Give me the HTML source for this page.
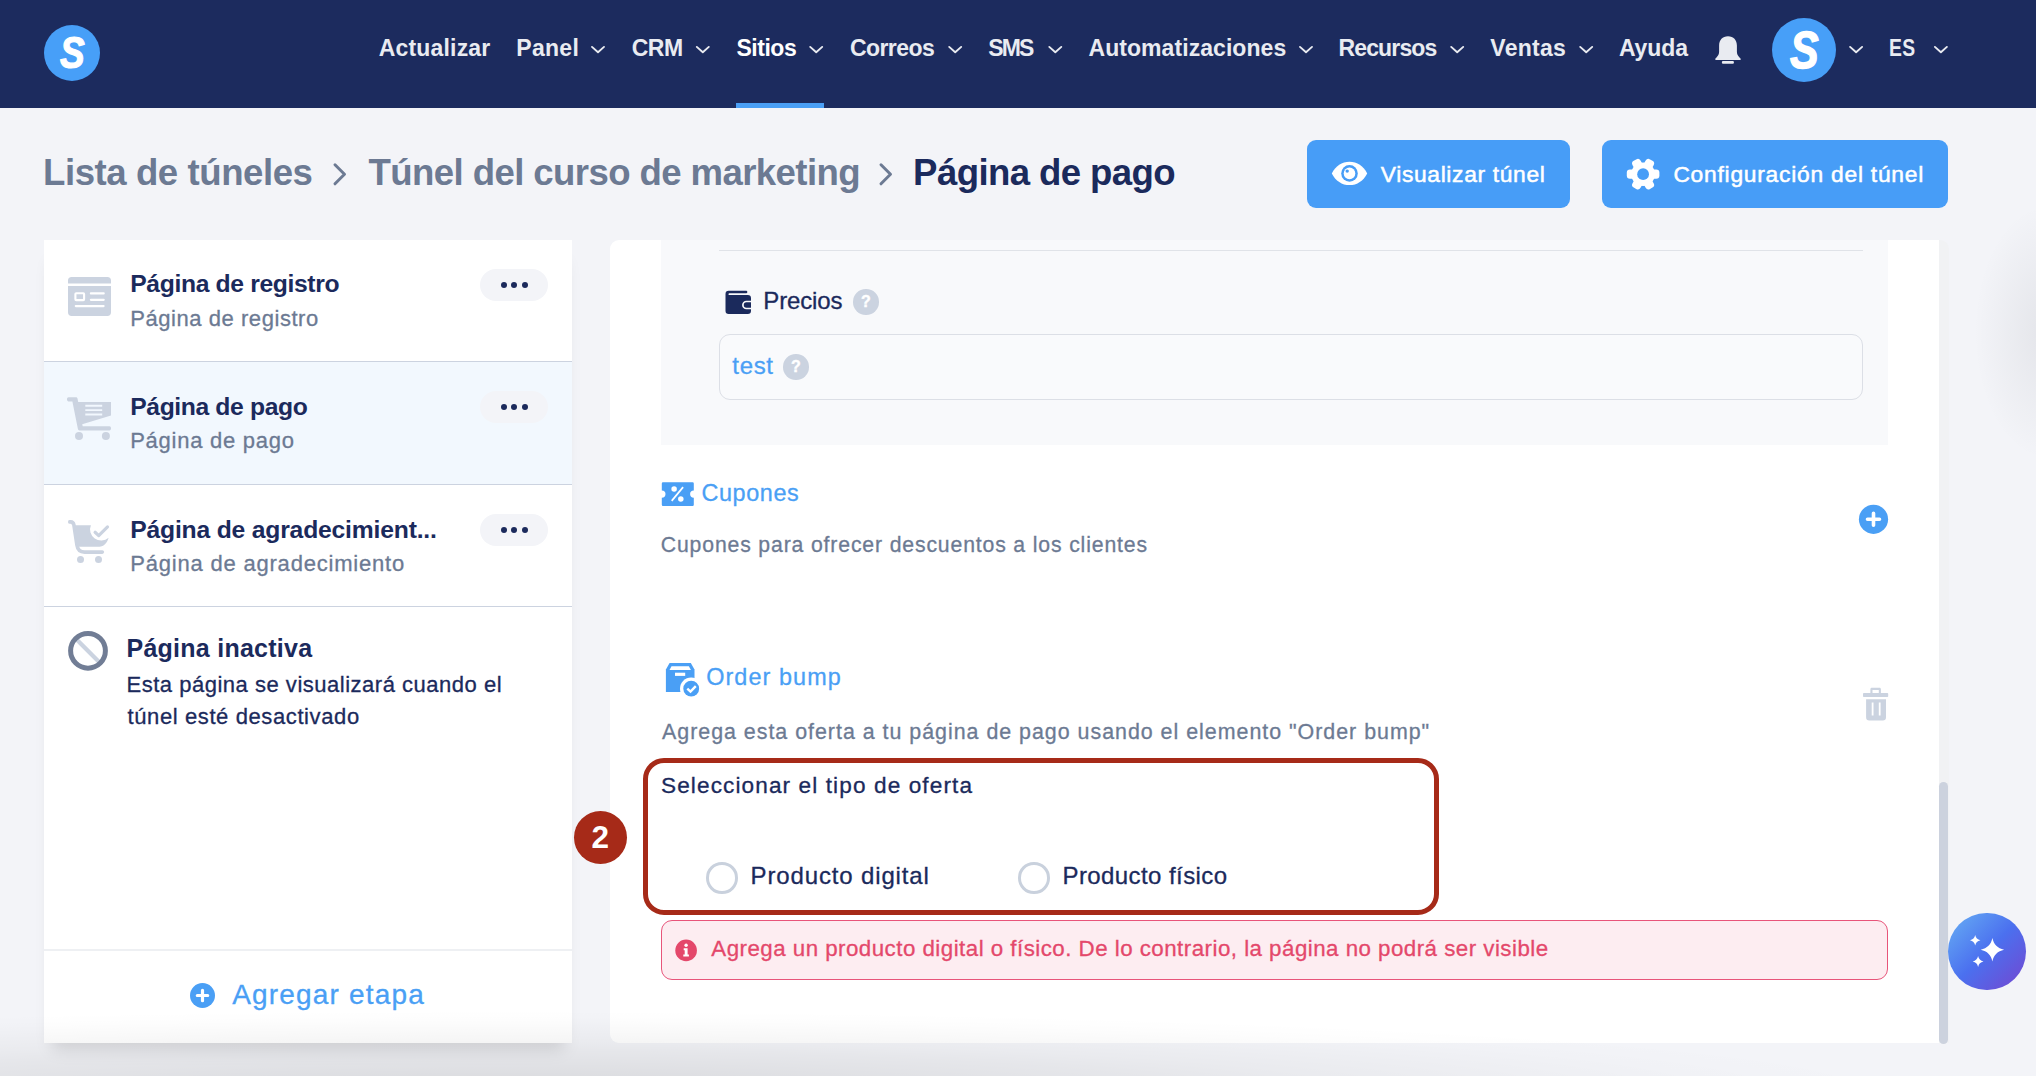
<!DOCTYPE html>
<html lang="es">
<head>
<meta charset="utf-8">
<title>Página de pago</title>
<style>
*{box-sizing:border-box;margin:0;padding:0}
html,body{width:2036px;height:1076px;overflow:hidden;background:#f3f4f8}
body{font-family:"Liberation Sans",sans-serif}
#root{position:relative;width:2036px;height:1076px;overflow:hidden;background:#f3f4f8}
#root>*{position:absolute}
#root>.grp{position:static;display:contents}
.t{position:absolute;white-space:nowrap;line-height:1;display:block}
svg{display:block;overflow:visible}

/* top nav */
#nav{left:0;top:0;width:2036px;height:107.5px;background:#1c2b5e}
#navline{left:736px;top:102.5px;width:88px;height:5px;background:#4a9ff5}
#logo{left:44px;top:25px;width:56px;height:56px;border-radius:50%;background:#479ff8}
#avatar{left:1772px;top:18px;width:64px;height:64px;border-radius:50%;background:#479ff8}
.chev{width:14px;height:8px}

/* header buttons */
.btn{background:#479df7;border-radius:9px;height:68px;top:140px}
#btn1{left:1307px;width:263px}
#btn2{left:1602px;width:346px}

/* sidebar */
#side{left:44px;top:240px;width:528px;height:802.5px;background:#fff;box-shadow:0 14px 16px -8px rgba(0,0,0,.13)}
#row2{left:44px;top:362px;width:528px;height:122px;background:#f2f8fe}
.sep{left:44px;width:528px;height:1px;background:#ccd3e0}
#sidefoot{left:44px;top:948.5px;width:528px;height:2px;background:#eef0f3}
.more{left:480px;width:68px;height:32px;border-radius:16px;background:#f3f4f8}
.more i{position:absolute;top:13px;width:6.2px;height:6.2px;border-radius:50%;background:#1b2a5c}

/* main panel */
#main{left:610px;top:240px;width:1329px;height:803px;background:#fff;border-radius:9px 0 0 9px}
#track{left:1939px;top:240px;width:9.5px;height:803px;background:#f1f2f4;border-radius:0 9px 0 0}
#thumb{left:1939.2px;top:782px;width:8.8px;height:262px;background:#ccd2de;border-radius:5px}
#greybox{left:661px;top:240px;width:1227px;height:205px;background:#f8f9fb}
#hr{left:719px;top:249.5px;width:1144px;height:1.5px;background:#e0e3e8}
#testbox{left:719px;top:334px;width:1144px;height:65.5px;border:1.3px solid #dcdfe6;border-radius:11px;background:#f9fafc}
.q{width:25.4px;height:25.4px;-webkit-text-stroke:.4px #fff;border-radius:50%;background:#cbd3e0;color:#fff;font-weight:700;font-size:16px;line-height:26px;text-align:center}
#redbox{left:643px;top:758px;width:796px;height:157px;border:5px solid #a62a18;border-radius:21px}
#badge{left:573.5px;top:810.5px;width:53.5px;height:53.5px;border-radius:50%;background:#a62a18;color:#fff;font-weight:700;font-size:31.5px;line-height:52.5px;text-align:center}
.radio{width:31.5px;height:31.5px;border-radius:50%;border:3px solid #c9d1dd;background:#fff;top:862.2px}
#alert{left:661px;top:920px;width:1227px;height:60px;border:1.3px solid #e8557a;border-radius:11px;background:#fdedf1}

/* floating */
#ai{left:1948px;top:912.5px;width:77.5px;height:77.5px;border-radius:50%;background:linear-gradient(135deg,#63a6f3 8%,#4b70ef 50%,#6e4cd4 92%)}
#shade-b{left:0;top:956px;width:2036px;height:120px;background:radial-gradient(ellipse 1400px 80px at 500px 134px,rgba(0,0,0,.115) 0%,rgba(0,0,0,.055) 50%,rgba(0,0,0,.04) 60%,rgba(0,0,0,.008) 88%,rgba(0,0,0,0) 100%);pointer-events:none}
#shade-r{left:1900px;top:120px;width:136px;height:460px;background:radial-gradient(ellipse 74px 128px at 148px 212px,rgba(20,22,40,.07),rgba(20,22,40,.03) 55%,rgba(20,22,40,0) 100%);pointer-events:none}

#n1{left:378.80px;top:37.30px;font-size:23.0px;font-weight:700;color:#e9ebf1;letter-spacing:0.170px;}
#n2{left:516.30px;top:37.30px;font-size:23.0px;font-weight:700;color:#e9ebf1;letter-spacing:0.282px;}
#n3{left:631.80px;top:37.30px;font-size:23.0px;font-weight:700;color:#e9ebf1;letter-spacing:-0.560px;}
#n4{left:736.50px;top:37.30px;font-size:23.0px;font-weight:700;color:#ffffff;letter-spacing:-0.486px;}
#n5{left:850.00px;top:37.30px;font-size:23.0px;font-weight:700;color:#e9ebf1;letter-spacing:-0.584px;}
#n6{left:988.30px;top:37.30px;font-size:23.0px;font-weight:700;color:#e9ebf1;letter-spacing:-1.850px;}
#n7{left:1088.50px;top:37.30px;font-size:23.0px;font-weight:700;color:#e9ebf1;letter-spacing:0.059px;}
#n8{left:1338.50px;top:37.30px;font-size:23.0px;font-weight:700;color:#e9ebf1;letter-spacing:-0.862px;}
#n9{left:1490.30px;top:37.30px;font-size:23.0px;font-weight:700;color:#e9ebf1;letter-spacing:0.267px;}
#n10{left:1618.90px;top:37.30px;font-size:23.0px;font-weight:700;color:#e9ebf1;letter-spacing:-0.087px;}
#n11{left:1889.16px;top:37.30px;font-size:23.0px;font-weight:700;color:#e9ebf1;letter-spacing:0.421px;transform-origin:0 0;transform:scaleX(.84);}
#b1{left:43.00px;top:155.41px;font-size:36.6px;font-weight:700;color:#6c7a93;letter-spacing:-0.433px;}
#b2{left:368.60px;top:155.41px;font-size:36.6px;font-weight:700;color:#6c7a93;letter-spacing:-0.600px;}
#b3{left:913.10px;top:155.41px;font-size:36.6px;font-weight:700;color:#1b2a5c;letter-spacing:-0.598px;}
#bt1{left:1380.70px;top:162.71px;font-size:22.8px;font-weight:400;color:#ffffff;letter-spacing:0.666px;-webkit-text-stroke:0.5px #fff;}
#bt2{left:1673.40px;top:162.71px;font-size:22.8px;font-weight:400;color:#ffffff;letter-spacing:0.758px;-webkit-text-stroke:0.5px #fff;}
#s1a{left:130.20px;top:271.71px;font-size:24.7px;font-weight:700;color:#1b2a5c;letter-spacing:-0.353px;}
#s1b{left:130.20px;top:307.61px;font-size:22px;font-weight:400;color:#6c7a93;letter-spacing:0.558px;-webkit-text-stroke:0.3px #6c7a93;}
#s2a{left:130.20px;top:394.71px;font-size:24.7px;font-weight:700;color:#1b2a5c;letter-spacing:-0.374px;}
#s2b{left:130.20px;top:430.11px;font-size:22px;font-weight:400;color:#6c7a93;letter-spacing:0.738px;-webkit-text-stroke:0.3px #6c7a93;}
#s3a{left:130.20px;top:517.71px;font-size:24.7px;font-weight:700;color:#1b2a5c;letter-spacing:-0.191px;}
#s3b{left:130.20px;top:553.11px;font-size:22px;font-weight:400;color:#6c7a93;letter-spacing:0.801px;-webkit-text-stroke:0.3px #6c7a93;}
#s4a{left:126.50px;top:635.71px;font-size:25px;font-weight:700;color:#1b2a5c;letter-spacing:0.256px;}
#s4b{left:126.50px;top:674.11px;font-size:22px;font-weight:400;color:#1b2a5c;letter-spacing:0.514px;-webkit-text-stroke:0.3px #1b2a5c;}
#s4c{left:127.50px;top:706.11px;font-size:22px;font-weight:400;color:#1b2a5c;letter-spacing:0.605px;-webkit-text-stroke:0.3px #1b2a5c;}
#s5{left:232.20px;top:980.70px;font-size:28px;font-weight:400;color:#4a9ff5;letter-spacing:1.184px;-webkit-text-stroke:0.3px #4a9ff5;}
#m1{left:763.30px;top:288.91px;font-size:24px;font-weight:400;color:#1b2a5c;letter-spacing:-0.155px;-webkit-text-stroke:0.3px #1b2a5c;}
#m2{left:732.30px;top:354.32px;font-size:24px;font-weight:400;color:#4a9ff5;letter-spacing:0.661px;-webkit-text-stroke:0.3px #4a9ff5;}
#m3{left:701.40px;top:481.91px;font-size:23.4px;font-weight:400;color:#4a9ff5;letter-spacing:0.627px;-webkit-text-stroke:0.3px #4a9ff5;}
#m4{left:660.80px;top:533.81px;font-size:21.2px;font-weight:400;color:#6c7a93;letter-spacing:0.859px;-webkit-text-stroke:0.3px #6c7a93;}
#m5{left:706.20px;top:665.91px;font-size:23.4px;font-weight:400;color:#4a9ff5;letter-spacing:1.090px;-webkit-text-stroke:0.3px #4a9ff5;}
#m6{left:662.00px;top:721.51px;font-size:21.4px;font-weight:400;color:#6c7a93;letter-spacing:0.989px;-webkit-text-stroke:0.3px #6c7a93;}
#m7{left:661.00px;top:775.01px;font-size:22.6px;font-weight:400;color:#1b2a5c;letter-spacing:1.103px;-webkit-text-stroke:0.3px #1b2a5c;}
#m8{left:750.60px;top:864.01px;font-size:24px;font-weight:400;color:#1b2a5c;letter-spacing:0.853px;-webkit-text-stroke:0.3px #1b2a5c;}
#m9{left:1062.50px;top:864.01px;font-size:24px;font-weight:400;color:#1b2a5c;letter-spacing:0.415px;-webkit-text-stroke:0.3px #1b2a5c;}
#m10{left:711.30px;top:938.01px;font-size:22.3px;font-weight:400;color:#e4486b;letter-spacing:0.480px;-webkit-text-stroke:0.3px #e4486b;}
</style>
</head>
<body>
<div id="root">
<!-- ===== top navigation ===== -->
<div id="nav"></div>
<div id="navline"></div>
<div id="logo"></div>
<span class="t" style="left:59.5px;top:31.3px;font-size:44px;font-weight:700;font-style:italic;color:#fff;-webkit-text-stroke:1.2px #fff;transform-origin:0 0;transform:scaleX(.84)">S</span>
<div id="avatar"></div>
<span class="t" style="left:1789.5px;top:24.8px;font-size:51px;font-weight:700;font-style:italic;color:#fff;-webkit-text-stroke:1.4px #fff;transform-origin:0 0;transform:scaleX(.84)">S</span>

<!-- ===== header buttons ===== -->
<div class="btn" id="btn1"></div>
<div class="btn" id="btn2"></div>

<!-- ===== sidebar ===== -->
<div id="side"></div>
<div id="row2"></div>
<div class="sep" style="top:361px"></div>
<div class="sep" style="top:484px"></div>
<div class="sep" style="top:606px"></div>
<div id="sidefoot"></div>
<div class="more" style="top:269px"><i style="left:20.7px"></i><i style="left:31.3px"></i><i style="left:41.9px"></i></div>
<div class="more" style="top:391px"><i style="left:20.7px"></i><i style="left:31.3px"></i><i style="left:41.9px"></i></div>
<div class="more" style="top:514px"><i style="left:20.7px"></i><i style="left:31.3px"></i><i style="left:41.9px"></i></div>

<!-- ===== main panel ===== -->
<div id="main"></div>
<div id="track"></div>
<div id="thumb"></div>
<div id="greybox"></div>
<div id="hr"></div>
<div id="testbox"></div>
<div class="q" style="left:853.2px;top:289.3px">?</div>
<div class="q" style="left:783.3px;top:354.4px">?</div>
<div id="redbox"></div>
<div id="badge">2</div>
<div class="radio" style="left:706.2px"></div>
<div class="radio" style="left:1018.4px"></div>
<div id="alert"></div>
<div id="ai"></div>

<!-- ===== icons (page coordinates) ===== -->
<svg id="icons" style="left:0;top:0" width="2036" height="1076" viewBox="0 0 2036 1076">
  <!-- nav chevrons -->
  <g fill="none" stroke="#e9ebf1" stroke-width="1.9" stroke-linecap="round" stroke-linejoin="round">
    <path d="M592 46.9l6 5.4 6-5.4"/>
    <path d="M696.8 46.9l6 5.4 6-5.4"/>
    <path d="M810.2 46.9l6 5.4 6-5.4"/>
    <path d="M949.2 46.9l6 5.4 6-5.4"/>
    <path d="M1049.3 46.9l6 5.4 6-5.4"/>
    <path d="M1300 46.9l6 5.4 6-5.4"/>
    <path d="M1451.2 46.9l6 5.4 6-5.4"/>
    <path d="M1580.2 46.9l6 5.4 6-5.4"/>
    <path d="M1850.1 46.9l6 5.4 6-5.4"/>
    <path d="M1934.9 46.9l6 5.4 6-5.4"/>
  </g>
  <!-- bell -->
  <path fill="#e9ebf1" d="M1728 36.300c-5.500 0-8.900 3.900-8.900 9.200v6.200c0 2.300-.8 3.900-2.600 5.700-.9.900-1.300 1.400-1.300 1.900 0 .4.300.6.800.6h24c.5 0 .8-.2.800-.6 0-.5-.4-1-1.300-1.900-1.800-1.800-2.600-3.400-2.600-5.700v-6.200c0-5.300-3.400-9.200-8.900-9.200z"/>
  <rect fill="#e9ebf1" x="1721.900" y="60.900" width="12" height="2.900" rx="1.100"/>
  <!-- breadcrumb chevrons -->
  <g fill="none" stroke="#6c7a93" stroke-width="3" stroke-linecap="round" stroke-linejoin="round">
    <path d="M335 164.800l9.500 9.500-9.500 9.500"/>
    <path d="M881 164.800l9.500 9.500-9.500 9.500"/>
  </g>
  <!-- eye -->
  <g transform="translate(1349.500 173.400)">
    <path fill="#fff" d="M-17.700 0C-14-7.300-7.500-11.700 0-11.700S14-7.300 17.700 0C14 7.300 7.500 11.700 0 11.700S-14 7.300-17.700 0z"/>
    <circle r="8.300" fill="#479df7"/>
    <circle r="5.800" fill="#fff"/>
    <circle cx="-2.300" cy="-2.300" r="1.700" fill="#479df7"/>
  </g>
  <!-- gear -->
  <g transform="translate(1643.100 174.200)" fill="#fff">
    <circle r="11.800"/>
    <g id="tooth"><rect x="-4.600" y="-16.300" width="9.200" height="32.600" rx="3.200" transform="rotate(90)"/></g>
    <rect x="-4.600" y="-16.300" width="9.200" height="32.600" rx="3.200" transform="rotate(30)"/>
    <rect x="-4.600" y="-16.300" width="9.200" height="32.600" rx="3.200" transform="rotate(-30)"/>
    <circle r="5.900" fill="#479df7"/>
  </g>
  <!-- sidebar: registration page icon -->
  <g fill="#cbd3e0">
    <path d="M71.700 276.900h35.600a3.700 3.700 0 0 1 3.700 3.700v2.900h-43v-2.900a3.700 3.700 0 0 1 3.700-3.700z"/>
    <path d="M68 286.100h43v26.200a3.700 3.700 0 0 1-3.700 3.700h-35.600a3.700 3.700 0 0 1-3.700-3.700z"/>
  </g>
  <g fill="none" stroke="#fff" stroke-width="2.200" stroke-linecap="round">
    <rect x="75.400" y="293.200" width="8.700" height="6.900" rx=".8" stroke-width="2.100"/>
    <path d="M90.900 293.400h12.800M90.900 299.800h12.800M75.800 306.100h27.800"/>
  </g>
  <!-- sidebar: cart icon -->
  <g fill="#cbd3e0">
    <path d="M69.600 397.200h6.200c.9 0 1.500.5 1.700 1.300l.7 3.400h32.800v13.500l-28.800 8.800.5 2h26.700c1 0 1.600.7 1.600 2.100s-.6 2.100-1.600 2.100h-29.900c-.9 0-1.400-.5-1.600-1.300l-5.500-27.700h-3.800c-1 0-1.600-.8-1.600-2.100s.6-2.100 1.600-2.100z"/>
    <circle cx="79" cy="436.100" r="4"/>
    <circle cx="105.900" cy="436.100" r="4"/>
  </g>
  <path stroke="#f2f8fe" stroke-width="1.900" d="M85.300 405.700h16.900M85.300 410.100h16.900M85.300 414.500h16.900"/>
  <!-- sidebar: cart-check icon -->
  <path fill="none" stroke="#cbd3e0" stroke-width="3.600" stroke-linecap="round" stroke-linejoin="round" d="M69.800 521.900c2.300-.300 3.700.900 4.100 3l3 20.100c.600 4.200 3.300 7.100 7.700 7.100h17.700"/>
  <path fill="#cbd3e0" d="M74.600 525.200h16.300a11.150 11.150 0 0 0 17.700 12.600c-1.300 4.900-4.700 9-9.300 9h-21.500z"/>
  <g fill="#cbd3e0">
    <circle cx="80.500" cy="559.500" r="3.500"/>
    <circle cx="98.500" cy="559.500" r="3.500"/>
  </g>
  <path fill="none" stroke="#cbd3e0" stroke-width="3.200" stroke-linecap="round" stroke-linejoin="round" d="M95.100 532.300l3.600 3.300 8.800-8.700"/>
  <!-- sidebar: inactive icon -->
  <path stroke="#cbd3e0" stroke-width="4.200" d="M76.400 639.200l23.200 23.200"/>
  <circle cx="88" cy="650.800" r="17.400" fill="none" stroke="#717d95" stroke-width="5"/>
  <!-- sidebar: add-stage plus -->
  <circle cx="202.500" cy="995.500" r="12.500" fill="#4a9ff5"/>
  <path stroke="#fff" stroke-width="3.200" stroke-linecap="round" d="M197.300 995.500h10.400M202.500 990.300v10.400"/>
  <!-- wallet -->
  <path fill="#1b2a5c" d="M728.7 290.800h17.400a1.250 1.250 0 0 1 0 2.500h-16.700a.9.9 0 0 0 0 1.800h18.400a3.200 3.200 0 0 1 3.200 3.200v12.400a3.200 3.200 0 0 1-3.200 3.200h-19.100a3.200 3.200 0 0 1-3.200-3.200v-16.700a3.200 3.200 0 0 1 3.200-3.200z"/>
  <path fill="none" stroke="#f8f9fb" stroke-width="1.700" d="M751.800 301.500h-5.400a3.500 3.500 0 0 0 0 7h5.400"/>
  <!-- coupon -->
  <path fill="#4a9ff5" d="M663 482.2h29.6a1.2 1.2 0 0 1 1.2 1.2v7a3.7 3.7 0 0 0 0 7.400v7a1.2 1.2 0 0 1-1.2 1.2h-29.6a1.2 1.2 0 0 1-1.2-1.2v-7a3.7 3.7 0 0 0 0-7.400v-7a1.2 1.2 0 0 1 1.2-1.2z"/>
  <g fill="#fff" stroke="none">
    <circle cx="674.1" cy="489.1" r="2.750"/>
    <circle cx="680.8" cy="499" r="2.750"/>
  </g>
  <path stroke="#fff" stroke-width="1.700" d="M683.1 487.100l-11.400 13.800"/>
  <!-- coupons plus -->
  <circle cx="1873.500" cy="519.300" r="14.600" fill="#4a9ff5"/>
  <path stroke="#fff" stroke-width="3.600" stroke-linecap="round" d="M1867.500 519.300h12M1873.500 513.300v12"/>
  <!-- order bump box -->
  <path fill="#4a9ff5" d="M669.6 663.1h21.2l3.7 6.3v22.5h-28.6v-22.5z"/>
  <path fill="#fff" d="M671.5 666.2h17.4l2 3.7h-21.4z"/>
  <rect x="675" y="672.7" width="10.2" height="3.2" fill="#fff"/>
  <circle cx="691.2" cy="688.7" r="11.2" fill="#fff"/>
  <circle cx="691.2" cy="688.7" r="7.9" fill="#4a9ff5"/>
  <path fill="none" stroke="#fff" stroke-width="2.4" stroke-linejoin="miter" d="M687.3 688.6l3.2 3 5.3-5.5"/>
  <!-- trash -->
  <g fill="#cbd3e0">
    <path d="M1871.800 687.800h7.700c.8 0 1.400.6 1.400 1.400v3.700h-2.100v-3h-6.300v3h-2.100v-3.700c0-.8.600-1.400 1.400-1.400z"/>
    <rect x="1863" y="692.900" width="25.200" height="4.200" rx=".8"/>
    <path d="M1866.100 699.300h19.900v17.900a3.200 3.200 0 0 1-3.200 3.200h-13.500a3.200 3.200 0 0 1-3.200-3.200z"/>
  </g>
  <path stroke="#fff" stroke-width="1.800" d="M1872.600 702.600v12.800M1879.700 702.600v12.800"/>
  <!-- alert info icon -->
  <circle cx="686.100" cy="950.400" r="10.800" fill="#e4486b"/>
  <g fill="#fff">
    <circle cx="686.100" cy="945.300" r="1.700"/>
    <path d="M683.700 948.300h3.900v6.300h1.300v1.900h-5.600v-1.900h1.400v-4.400h-1z"/>
  </g>
  <!-- AI sparkles -->
  <g fill="#fff">
    <path d="M1992.40 938.00C1993.80 944.55 1997.55 948.30 2004.10 949.70C1997.55 951.10 1993.80 954.85 1992.40 961.40C1991.00 954.85 1987.25 951.10 1980.70 949.70C1987.25 948.30 1991.00 944.55 1992.40 938.00z"/>
    <path d="M1975.20 935.10C1975.82 938.01 1977.49 939.68 1980.40 940.30C1977.49 940.92 1975.82 942.59 1975.20 945.50C1974.58 942.59 1972.91 940.92 1970.00 940.30C1972.91 939.68 1974.58 938.01 1975.20 935.10z"/>
    <path d="M1978.10 956.10C1978.75 959.12 1980.48 960.85 1983.50 961.50C1980.48 962.15 1978.75 963.88 1978.10 966.90C1977.45 963.88 1975.72 962.15 1972.70 961.50C1975.72 960.85 1977.45 959.12 1978.10 956.10z"/>
  </g>
</svg>
<div id="shade-b"></div>
<div id="shade-r"></div>

<nav class="grp" aria-label="Navegación principal">
<span class="t" id="n1">Actualizar</span>
<span class="t" id="n2">Panel</span>
<span class="t" id="n3">CRM</span>
<span class="t" id="n4">Sitios</span>
<span class="t" id="n5">Correos</span>
<span class="t" id="n6">SMS</span>
<span class="t" id="n7">Automatizaciones</span>
<span class="t" id="n8">Recursos</span>
<span class="t" id="n9">Ventas</span>
<span class="t" id="n10">Ayuda</span>
<span class="t" id="n11">ES</span>
</nav>
<header class="grp" aria-label="Ruta y acciones">
<span class="t" id="b1">Lista de túneles</span>
<span class="t" id="b2">Túnel del curso de marketing</span>
<span class="t" id="b3">Página de pago</span>
<span class="t" id="bt1">Visualizar túnel</span>
<span class="t" id="bt2">Configuración del túnel</span>
</header>
<aside class="grp" aria-label="Etapas del túnel">
<span class="t" id="s1a">Página de registro</span>
<span class="t" id="s1b">Página de registro</span>
<span class="t" id="s2a">Página de pago</span>
<span class="t" id="s2b">Página de pago</span>
<span class="t" id="s3a">Página de agradecimient...</span>
<span class="t" id="s3b">Página de agradecimiento</span>
<span class="t" id="s4a">Página inactiva</span>
<span class="t" id="s4b">Esta página se visualizará cuando el</span>
<span class="t" id="s4c">túnel esté desactivado</span>
<span class="t" id="s5">Agregar etapa</span>
</aside>
<main class="grp" aria-label="Configuración de la página">
<span class="t" id="m1">Precios</span>
<span class="t" id="m2">test</span>
<span class="t" id="m3">Cupones</span>
<span class="t" id="m4">Cupones para ofrecer descuentos a los clientes</span>
<span class="t" id="m5">Order bump</span>
<span class="t" id="m6">Agrega esta oferta a tu página de pago usando el elemento "Order bump"</span>
<span class="t" id="m7">Seleccionar el tipo de oferta</span>
<span class="t" id="m8">Producto digital</span>
<span class="t" id="m9">Producto físico</span>
<span class="t" id="m10">Agrega un producto digital o físico. De lo contrario, la página no podrá ser visible</span>
</main>
</div>
</body>
</html>
